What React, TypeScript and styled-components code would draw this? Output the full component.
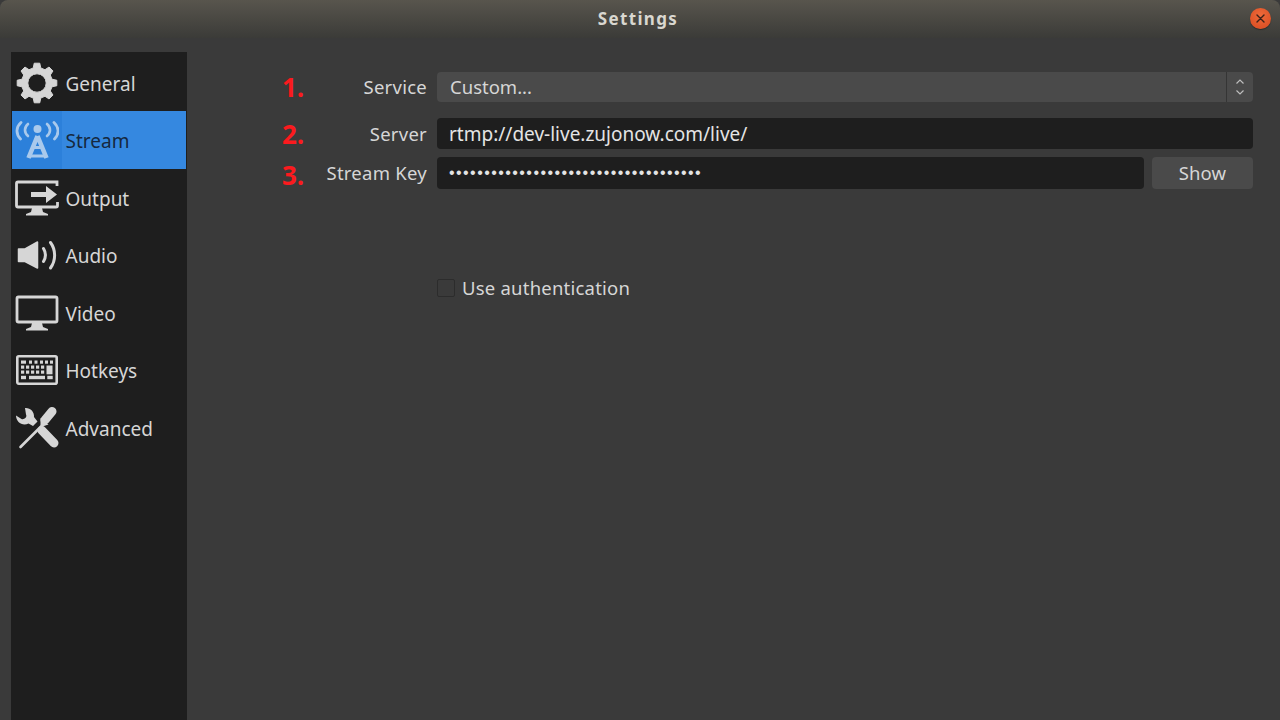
import React from 'react'
import styled, { createGlobalStyle } from 'styled-components'

const GlobalStyle = createGlobalStyle`
  html, body {
    margin: 0;
    padding: 0;
    height: 100%;
    overflow: hidden;
    background: #3a3a3a;
  }
  #root {
    height: 100%;
  }
`

const Window = styled.div`
  width: 1280px;
  height: 720px;
  display: flex;
  flex-direction: column;
  background: #3a3a3a;
  color: #d8d8d8;
  font-family: 'Noto Sans', 'Open Sans', sans-serif;
  overflow: hidden;
`

const TitleBar = styled.div`
  height: 38px;
  flex: none;
  display: grid;
  grid-template-columns: 1fr auto 1fr;
  align-items: center;
  background: linear-gradient(#58554d, #3b3b38);
  border-radius: 8px 8px 0 0;
  padding: 0 9px 2px 0;
  box-sizing: border-box;
`

const Title = styled.div`
  grid-column: 2;
  font-size: 17px;
  font-weight: 700;
  letter-spacing: 1.35px;
  color: #d9d7d0;
  padding-left: 5px;
`

const CloseButton = styled.button`
  grid-column: 3;
  justify-self: end;
  width: 21px;
  height: 21px;
  padding: 0;
  border: none;
  border-radius: 50%;
  display: flex;
  align-items: center;
  justify-content: center;
  background: radial-gradient(circle at 50% 35%, #ee6a3a, #d9491f);
  box-shadow: 0 1px 1px rgba(0, 0, 0, 0.35);
`

const Body = styled.div`
  flex: 1;
  min-height: 0;
  display: flex;
  padding: 14px 27px 0 11px;
`

const Sidebar = styled.nav`
  width: 176px;
  flex: none;
  box-sizing: border-box;
  padding: 2px 1px 0;
  background: #1e1e1e;
`

const NavItem = styled.div<{ $active?: boolean; $height: number }>`
  height: ${({ $height }) => $height}px;
  display: flex;
  align-items: center;
  font-size: 19px;
  color: ${({ $active }) => ($active ? '#16293f' : '#d6d6d6')};
  background: ${({ $active }) => ($active ? '#3588e0' : 'transparent')};
`

const NavIcon = styled.span<{ $active?: boolean }>`
  width: 50px;
  height: 100%;
  flex: none;
  display: flex;
  align-items: center;
  justify-content: center;
  color: ${({ $active }) => ($active ? '#a9c9ec' : '#d6d6d6')};
  background: ${({ $active }) => ($active ? '#2c80da' : 'transparent')};
  padding-right: 1px;
  box-sizing: border-box;
  margin-right: 3.5px;
`

const NavLabel = styled.span`
  padding-top: 2px;
`

const Form = styled.main`
  flex: 1;
  min-width: 0;
  padding: 20px 0 0 95px;
  display: flex;
  flex-direction: column;
`

const Row = styled.div<{ $height: number; $after: number }>`
  height: ${({ $height }) => $height}px;
  margin-bottom: ${({ $after }) => $after}px;
  display: grid;
  grid-template-columns: 40px 105px 1fr;
  align-items: center;
`

const Marker = styled.span<{ $offset?: number }>`
  color: #fb1a1e;
  font-size: 26px;
  font-weight: 700;
  font-family: 'Open Sans', sans-serif;
  line-height: 1;
  margin-top: ${({ $offset }) => $offset ?? 0}px;
`

const Label = styled.label<{ $lift?: boolean }>`
  font-size: 18.5px;
  letter-spacing: 0.25px;
  color: #d6d6d6;
  text-align: right;
  white-space: nowrap;
  padding-bottom: ${({ $lift }) => ($lift ? 2 : 0)}px;
`

const Field = styled.div`
  margin-left: 10px;
  min-width: 0;
  display: flex;
  gap: 8px;
  height: 100%;
`

const Combo = styled.div`
  flex: 1;
  display: flex;
  background: #4a4a4a;
  border-radius: 4px;
  overflow: hidden;
`

const ComboText = styled.div`
  flex: 1;
  display: flex;
  align-items: center;
  padding: 0 0 2px 13px;
  font-size: 18.5px;
  color: #d6d6d6;
`

const ComboArrows = styled.div`
  width: 26px;
  border-left: 1px solid #353535;
  display: flex;
  align-items: center;
  justify-content: center;
  color: #bdbdbd;
`

const Input = styled.div`
  flex: 1;
  display: flex;
  align-items: center;
  padding-left: 12px;
  background: #1e1e1e;
  border-radius: 4px;
  font-size: 19px;
  color: #e4e4e4;
  white-space: nowrap;
`

const Dots = styled.span`
  font-family: 'Liberation Sans', sans-serif;
  font-size: 16px;
  letter-spacing: 1.43px;
`

const ShowButton = styled.button`
  width: 101px;
  flex: none;
  border: none;
  border-radius: 4px;
  background: #4a4a4a;
  color: #d6d6d6;
  font-family: inherit;
  font-size: 18.5px;
  letter-spacing: 0.15px;
  padding: 0 0 2px;
`

const AuthRow = styled.div`
  margin: 88px 0 0 155px;
  display: flex;
  align-items: center;
  gap: 7px;
  height: 20px;
  font-size: 18.5px;
  letter-spacing: 0.22px;
  color: #d6d6d6;
`

const Checkbox = styled.span`
  width: 16px;
  height: 16px;
  flex: none;
  margin-top: 2px;
  border: 1px solid #2c2c2c;
  border-radius: 2px;
  background: #3a3a3a;
`

// eight teeth, one of them pointing straight up
const gearOutline = () => {
  const point = (radius: number, degrees: number) => {
    const a = ((degrees - 90) * Math.PI) / 180
    return `${(22 + radius * Math.cos(a)).toFixed(2)} ${(22 + radius * Math.sin(a)).toFixed(2)}`
  }
  let d = ''
  for (let i = 0; i < 8; i++) {
    const mid = i * 45
    d += `${i === 0 ? 'M' : 'L'}${point(15.5, mid - 14)}L${point(20, mid - 8)}L${point(20, mid + 8)}L${point(15.5, mid + 14)}`
  }
  return `${d}ZM22 12.8a9.200 9.200 0 1 0 0 18.400 9.200 9.200 0 0 0 0-18.400z`
}

const GearIcon = () => (
  <svg width="44" height="44" viewBox="0 0 44 44" fill="currentColor" stroke="currentColor" strokeWidth="1" strokeLinejoin="round">
    <path fillRule="evenodd" d={gearOutline()} />
  </svg>
)

const StreamIcon = () => (
  <svg width="44" height="40" viewBox="0 0 44 40" fill="none" stroke="currentColor" strokeLinecap="round">
    <circle cx="22.500" cy="9" r="4" fill="currentColor" stroke="none" />
    <path d="M13 4C9 7.500 9 12.500 13 16M32 4c4 3.500 4 8.500 0 12" strokeWidth="2.600" />
    <path d="M6 2.500C1 7 .5 14 5.500 19M39 2.500C44 7 44.500 14 39.500 19" strokeWidth="2.800" />
    <path d="M22.500 16 13.500 38M22.500 16 31.500 38" strokeWidth="4.600" strokeLinecap="butt" />
    <path d="M16 27.500h13M14 36h17" strokeWidth="3" strokeLinecap="butt" />
  </svg>
)

const OutputIcon = () => (
  <svg width="44" height="36" viewBox="0 0 44 36" fill="none">
    <path
      d="M42 6V2H3a1.500 1.500 0 0 0-1.500 1.500v22A1.500 1.500 0 0 0 3 27h38a1.500 1.500 0 0 0 1.500-1.500V22"
      stroke="currentColor"
      strokeWidth="2.800"
    />
    <path d="M16 12h15V6l11 8.500L31 23v-6H16z" fill="currentColor" />
    <path d="M17 28h10l1 4 5 2v1.500H11V34l5-2z" fill="currentColor" />
  </svg>
)

const AudioIcon = () => (
  <svg width="42" height="34" viewBox="0 0 42 34" fill="none" stroke="currentColor" strokeLinecap="round">
    <path d="M2.500 11h6.500L21.500 4v26L9 23.500H2.500z" fill="currentColor" strokeWidth="1.500" strokeLinejoin="round" />
    <path d="M27.500 10.500c2.400 4 2.400 9 0 13" strokeWidth="3" />
    <path d="M34.500 4.500c5.500 7.500 5.500 18 0 25.500" strokeWidth="3" />
  </svg>
)

const VideoIcon = () => (
  <svg width="44" height="36" viewBox="0 0 44 36" fill="none">
    <rect x="2" y="2" width="40" height="25" rx="1.500" stroke="currentColor" strokeWidth="2.800" />
    <path d="M17 28h10l1 4 5 2v1.500H11V34l5-2z" fill="currentColor" />
  </svg>
)

const KeyboardIcon = () => (
  <svg width="44" height="30" viewBox="0 0 44 30" fill="currentColor">
    <rect x="2.300" y="1.300" width="39.400" height="27.400" rx="1.500" fill="none" stroke="currentColor" strokeWidth="2.600" />
    <rect x="6" y="5.500" width="5" height="3.200" />
    {[14, 19.500, 25, 30, 35].map(x => (
      <rect key={x} x={x} y="5.500" width="3" height="3.200" />
    ))}
    {[6, 11, 16, 21, 26].map(x => (
      <rect key={x} x={x} y="10.500" width="3.200" height="3.200" />
    ))}
    {[6, 11, 16, 21, 26].map(x => (
      <rect key={x} x={x} y="15.500" width="3.200" height="3.200" />
    ))}
    <rect x="31.500" y="10.500" width="6" height="8.800" />
    <rect x="6" y="20.800" width="5" height="3.400" />
    <rect x="14" y="20.800" width="16" height="3.400" />
    <rect x="32.300" y="20.800" width="5.400" height="3.400" />
  </svg>
)

const ToolsIcon = () => (
  <svg width="44" height="44" viewBox="0 0 44 44" fill="currentColor" stroke="currentColor">
    <path
      stroke="none"
      d="M10 2c5-.5 9.500 3.500 9 9l3.500 4.500-4.500 4.500-4.500-2.500C7.500 20.500 1 16 1 9.500L6.500 13C9 14 12.500 11 11 8.500z"
    />
    <path d="M27 24.500 39 37" strokeWidth="9" strokeLinecap="round" />
    <path d="M37 5.500 30 14" strokeWidth="9" strokeLinecap="round" />
    <path stroke="none" d="M25.500 12 33.500 18.500 27.500 20.500 25.500 19z" />
    <path d="M27 19.500 5.500 41" strokeWidth="2.600" strokeLinecap="round" />
  </svg>
)

const CloseGlyph = () => (
  <svg width="9" height="9" viewBox="0 0 9 9" stroke="#3d2018" strokeWidth="1.400" strokeLinecap="round">
    <path d="M1 1l7 7M8 1 1 8" />
  </svg>
)

const SpinArrows = () => (
  <svg width="10" height="18" viewBox="0 0 10 18" fill="none" stroke="currentColor" strokeWidth="1.200">
    <path d="M1.500 5.500 5 2l3.500 3.500M1.500 12.500 5 16l3.500-3.500" />
  </svg>
)

const navItems = [
  { label: 'General', icon: <GearIcon />, height: 57 },
  { label: 'Stream', icon: <StreamIcon />, height: 58, active: true },
  { label: 'Output', icon: <OutputIcon />, height: 57 },
  { label: 'Audio', icon: <AudioIcon />, height: 58 },
  { label: 'Video', icon: <VideoIcon />, height: 57 },
  { label: 'Hotkeys', icon: <KeyboardIcon />, height: 58 },
  { label: 'Advanced', icon: <ToolsIcon />, height: 57 }
]

export default function App() {
  return (
    <>
      <GlobalStyle />
      <Window>
        <TitleBar>
          <Title>Settings</Title>
          <CloseButton aria-label="Close">
            <CloseGlyph />
          </CloseButton>
        </TitleBar>
        <Body>
          <Sidebar>
            {navItems.map(item => (
              <NavItem key={item.label} $active={item.active} $height={item.height}>
                <NavIcon $active={item.active}>{item.icon}</NavIcon>
                <NavLabel>{item.label}</NavLabel>
              </NavItem>
            ))}
          </Sidebar>
          <Form>
            <Row $height={30} $after={16}>
              <Marker $offset={-1}>1.</Marker>
              <Label $lift>Service</Label>
              <Field>
                <Combo>
                  <ComboText>Custom...</ComboText>
                  <ComboArrows>
                    <SpinArrows />
                  </ComboArrows>
                </Combo>
              </Field>
            </Row>
            <Row $height={31} $after={8}>
              <Marker>2.</Marker>
              <Label>Server</Label>
              <Field>
                <Input>rtmp://dev-live.zujonow.com/live/</Input>
              </Field>
            </Row>
            <Row $height={32} $after={0}>
              <Marker $offset={4}>3.</Marker>
              <Label $lift>Stream Key</Label>
              <Field>
                <Input>
                  <Dots>{'•'.repeat(36)}</Dots>
                </Input>
                <ShowButton>Show</ShowButton>
              </Field>
            </Row>
            <AuthRow>
              <Checkbox />
              Use authentication
            </AuthRow>
          </Form>
        </Body>
      </Window>
    </>
  )
}
